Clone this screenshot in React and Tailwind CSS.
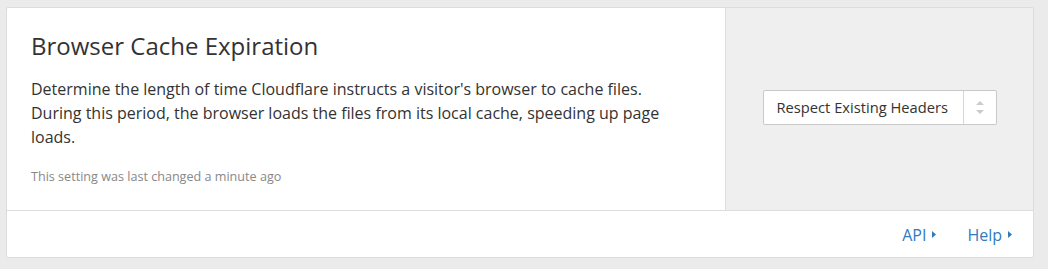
import React from "react";

export default function App() {
  return (
    <div
      className="w-[1048px] h-[269px] bg-[#ebebeb] pt-[7px] pl-[6px]"
      style={{ fontFamily: '"Open Sans", "Noto Sans", sans-serif' }}
    >
      <div className="w-[1028px] bg-white border border-[#dcdcdc] rounded-[2px]">
        <div className="flex border-b border-[#dedede]">
          <div className="w-[719px] border-r border-[#dedede] px-6 pt-6 pb-6">
            <h2 className="text-[24px] leading-[1.2] text-[#333333] font-normal">
              Browser Cache Expiration
            </h2>
            <p className="mt-4 text-[16px] leading-[24px] text-[#333333] w-[660px]">
              Determine the length of time Cloudflare instructs a visitor's browser to cache files.
              During this period, the browser loads the files from its local cache, speeding up page
              loads.
            </p>
            <p className="mt-[19px] text-[12.6px] leading-[18px] text-[#888888]">
              This setting was last changed a minute ago
            </p>
          </div>
          <div className="flex-1 bg-[#efefef] flex items-center justify-center pb-[3px]">
            <div className="flex w-[234px] h-[35px] bg-white border border-[#c9c9c9] rounded-[2px]">
              <div className="flex-1 flex items-center pl-[13px] text-[14.7px] text-[#333333]">
                Respect Existing Headers
              </div>
              <div className="w-[33px] border-l border-[#d6d6d6] flex flex-col items-center justify-center gap-[5px]">
                <svg width="8" height="4" viewBox="0 0 8 4">
                  <path d="M0 4 L4 0 L8 4 Z" fill="#cbcbcb" />
                </svg>
                <svg width="8" height="4" viewBox="0 0 8 4">
                  <path d="M0 0 L4 4 L8 0 Z" fill="#cbcbcb" />
                </svg>
              </div>
            </div>
          </div>
        </div>
        <div className="flex justify-end items-center gap-[31px] pr-[21px] h-[46px] pt-[2px] text-[16px] text-[#2f7bbf]">
          <a className="flex items-center gap-[6px]">
            API
            <svg width="4" height="7" viewBox="0 0 4 7">
              <path d="M0 0 L4 3.5 L0 7 Z" fill="#2f7bbf" />
            </svg>
          </a>
          <a className="flex items-center gap-[6px]">
            Help
            <svg width="4" height="7" viewBox="0 0 4 7">
              <path d="M0 0 L4 3.5 L0 7 Z" fill="#2f7bbf" />
            </svg>
          </a>
        </div>
      </div>
    </div>
  );
}
